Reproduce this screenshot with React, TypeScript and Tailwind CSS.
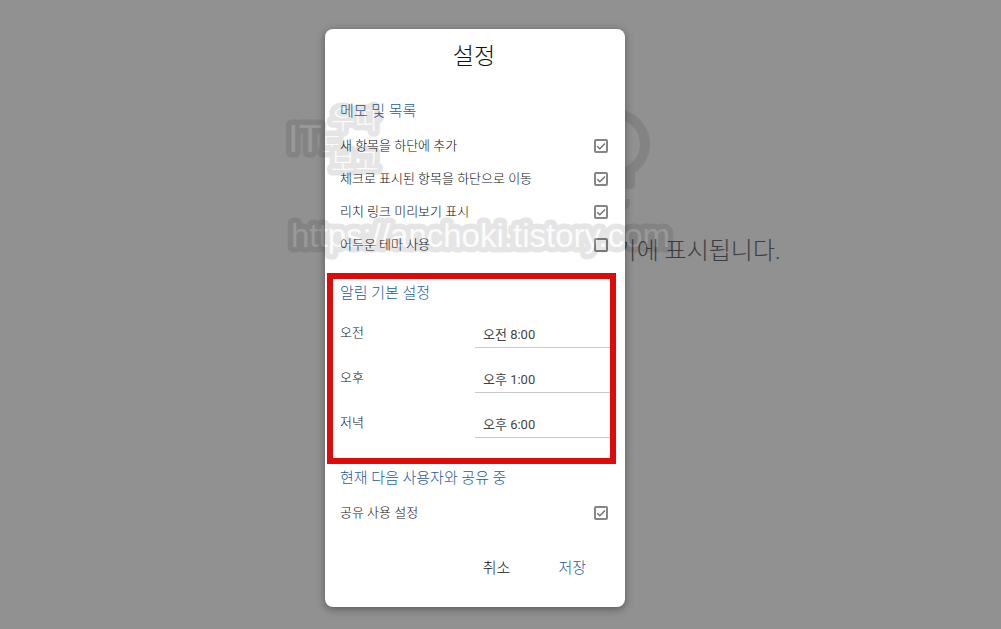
import { useState } from 'react'

const listOptions = [
  { id: 'add-bottom', label: '새 항목을 하단에 추가', checked: true },
  { id: 'move-checked', label: '체크로 표시된 항목을 하단으로 이동', checked: true },
  { id: 'rich-links', label: '리치 링크 미리보기 표시', checked: true },
  { id: 'dark-theme', label: '어두운 테마 사용', checked: false },
]

const reminders = [
  { id: 'morning', label: '오전', value: '오전 8:00' },
  { id: 'afternoon', label: '오후', value: '오후 1:00' },
  { id: 'evening', label: '저녁', value: '오후 6:00' },
]

function CheckRow({ id, label, checked }: { id: string; label: string; checked: boolean }) {
  const [on, setOn] = useState(checked)

  return (
    <div className="flex h-[33px] items-center justify-between">
      <label htmlFor={id} className="text-[13px]">
        {label}
      </label>
      <span className="grid">
        <input
          id={id}
          type="checkbox"
          checked={on}
          onChange={() => setOn(!on)}
          className="col-start-1 row-start-1 size-[14px] appearance-none rounded-[2px] border-2 border-[#858585] bg-white"
        />
        {on && (
          <svg viewBox="0 0 14 14" className="pointer-events-none col-start-1 row-start-1 size-[14px]" fill="none">
            <path d="M3.2 7.2 5.8 9.7 11 4.4" stroke="#707070" strokeWidth="1.4" />
          </svg>
        )}
      </span>
    </div>
  )
}

function SectionTitle({ children }: { children: string }) {
  return <h2 className="text-[15px] leading-5 text-[#1a5ba6]">{children}</h2>
}

function Bulb() {
  return (
    <svg viewBox="0 0 24 24" className="size-[120px] text-[#838383]" fill="currentColor">
      <path d="M9 21c0 .55.45 1 1 1h4c.55 0 1-.45 1-1v-1H9v1zm3-19C8.14 2 5 5.14 5 9c0 2.38 1.19 4.47 3 5.74V17c0 .55.45 1 1 1h6c.55 0 1-.45 1-1v-2.26c1.81-1.27 3-3.36 3-5.74 0-3.86-3.14-7-7-7zm2.85 11.1-.85.6V16h-4v-2.3l-.85-.6A4.997 4.997 0 0 1 7 9c0-2.76 2.24-5 5-5s5 2.24 5 5c0 1.63-.8 3.16-2.15 4.1z" />
    </svg>
  )
}

function Watermark() {
  return (
    <svg
      viewBox="0 0 400 190"
      className="pointer-events-none absolute top-[61px] -left-[45px] h-[190px] w-[400px] opacity-10"
      fill="#ddd"
      stroke="#111"
      strokeWidth="11"
      strokeLinejoin="round"
      strokeLinecap="round"
      paintOrder="stroke"
      fontFamily="'Liberation Sans', 'Noto Sans CJK KR', sans-serif"
    >
      <text x="8" y="62" fontSize="38">
        IT<tspan fontSize="22">도</tspan>
      </text>
      <text x="51" y="39" fontSize="26">우따</text>
      <text x="51" y="81" fontSize="26">보고</text>
      <text x="11" y="157" fontSize="33">https://anchoki.tistory.com</text>
    </svg>
  )
}

export default function App() {
  return (
    <div className="relative flex min-h-screen justify-center overflow-hidden bg-[#919191] pt-[29px] pr-[51px] pb-[22px] font-['Roboto','Noto_Sans_CJK_KR',sans-serif] font-light text-[#111]">
      <div className="absolute inset-x-0 top-[99px] flex flex-col items-center gap-4 pl-[228px]">
        <Bulb />
        <p className="text-2xl text-[#3c3e41]">추가한 메모가 여기에 표시됩니다.</p>
      </div>

      <main className="relative w-[300px] rounded-lg bg-white pr-[17px] pl-[15px] shadow-[0_2px_8px_rgba(0,0,0,0.4)]">
        <h1 className="pt-3 text-center text-[23px] leading-8">설정</h1>

        <section className="pt-7">
          <SectionTitle>메모 및 목록</SectionTitle>
          <div className="pt-2">
            {listOptions.map((o) => (
              <CheckRow key={o.id} {...o} />
            ))}
          </div>
        </section>

        <section className="mt-3 -mr-2 -ml-[13px] border-[6px] border-[#e00a0a] pt-1 pb-5 pl-[7px]">
          <SectionTitle>알림 기본 설정</SectionTitle>
          <div className="flex flex-col gap-[15px] pt-[15px]">
            {reminders.map((r) => (
              <div key={r.id} className="flex h-[30px] items-center justify-between">
                <label htmlFor={r.id} className="text-[13px]">
                  {r.label}
                </label>
                <input
                  id={r.id}
                  defaultValue={r.value}
                  className="h-[30px] w-[135px] border-b border-[#c8c8c8] px-2 pt-[2px] text-[13px] font-normal text-[#444]"
                />
              </div>
            ))}
          </div>
        </section>

        <section className="pt-1">
          <SectionTitle>현재 다음 사용자와 공유 중</SectionTitle>
          <div className="pt-2">
            <CheckRow id="sharing" label="공유 사용 설정" checked />
          </div>
        </section>

        <div className="-mr-[2px] flex justify-end pt-[21px] pb-5">
          <button type="button" className="h-9 px-6 text-[15px]">
            취소
          </button>
          <button type="button" className="h-9 px-6 text-[15px] text-[#1a5ba6]">
            저장
          </button>
        </div>

        <Watermark />
      </main>
    </div>
  )
}
